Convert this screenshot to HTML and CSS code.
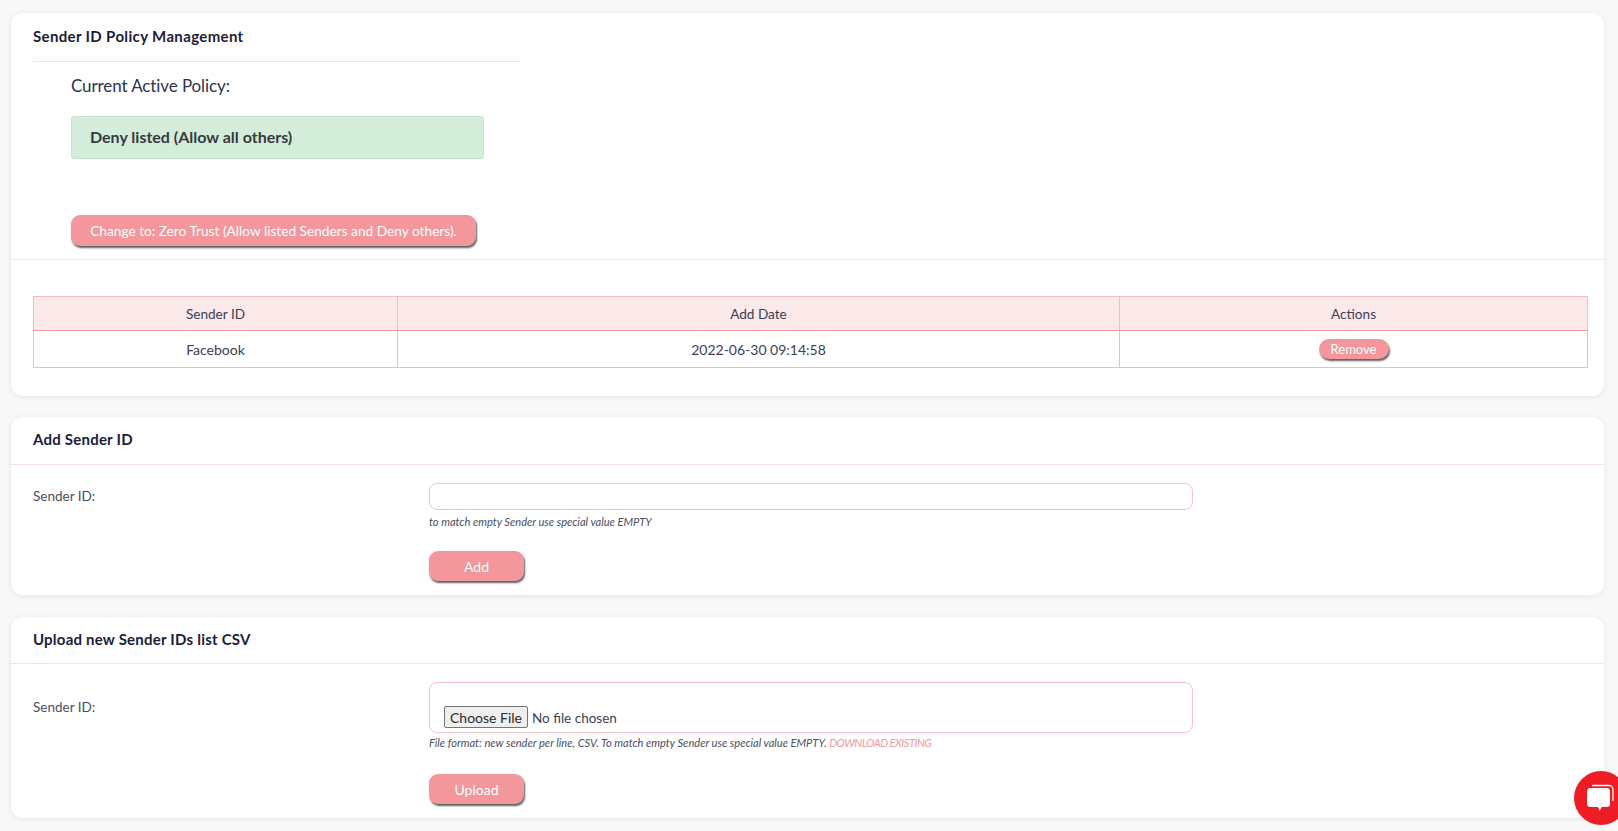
FILE: index.html
```html
<!DOCTYPE html>
<html lang="en">
<head>
<meta charset="utf-8">
<title>Sender ID Policy Management</title>
<link rel="stylesheet" href="styles.css">
</head>
<body>
<main class="page">
  <section class="card card-policy">
    <div class="policy-head"><h2 class="title">Sender ID Policy Management</h2></div>
    <div class="policy-body">
      <h3 class="policy-label">Current Active Policy:</h3>
      <div class="alert">Deny listed (Allow all others)</div>
      <button class="btn btn-change" type="button">Change to: Zero Trust (Allow listed Senders and Deny others).</button>
    </div>
    <div class="table-wrap">
      <table class="table">
        <colgroup><col class="col-a"><col class="col-b"><col class="col-c"></colgroup>
        <thead><tr><th>Sender ID</th><th>Add Date</th><th>Actions</th></tr></thead>
        <tbody><tr><td>Facebook</td><td>2022-06-30 09:14:58</td><td><button class="btn btn-remove" type="button">Remove</button></td></tr></tbody>
      </table>
    </div>
  </section>

  <section class="card card-add">
    <div class="card-head"><h2 class="title">Add Sender ID</h2></div>
    <form class="form">
      <label class="label">Sender ID:</label>
      <div class="field">
        <input class="input" type="text">
        <p class="help">to match empty Sender use special value EMPTY</p>
        <button class="btn btn-submit" type="button">Add</button>
      </div>
    </form>
  </section>

  <section class="card card-upload">
    <div class="card-head"><h2 class="title">Upload new Sender IDs list CSV</h2></div>
    <form class="form">
      <label class="label">Sender ID:</label>
      <div class="field">
        <div class="input input-file"><input class="file" type="file"></div>
        <p class="help">File format: new sender per line, CSV. To match empty Sender use special value EMPTY. <a class="link" href="#">DOWNLOAD EXISTING</a></p>
        <button class="btn btn-submit" type="button">Upload</button>
      </div>
    </form>
  </section>
</main>
<a class="chat" href="#" aria-label="Chat">
  <svg width="30" height="28" viewBox="0 0 30 28">
    <path d="M6 2.500h17a4 4 0 0 1 4 4V18" fill="none" stroke="#fff" stroke-width="1.300"/>
    <path d="M4.500 5h16a3.500 3.500 0 0 1 3.500 3.500v12a3.500 3.500 0 0 1-3.500 3.500h-5l-1.800 4-1.800-4H4.500A3.500 3.500 0 0 1 1 20.500v-12A3.500 3.500 0 0 1 4.500 5z" fill="#fff"/>
  </svg>
</a>
</body>
</html>
```
FILE: styles.css
```css
* { box-sizing: border-box; }
html, body { height: 100%; overflow: hidden; }
body {
  margin: 0;
  background: #f8f8f8;
  color: #3a3f55;
  font-family: "Lato", "Liberation Sans", sans-serif;
  font-size: 14px;
}
.page { padding: 13px 14px 0 11px; }
.card {
  background: #fff;
  border-radius: 12px;
  box-shadow: 0 1px 6px rgba(0, 0, 0, .08);
}
.card-policy { height: 383px; }
.card-add { height: 178px; margin-top: 21px; }
.card-upload { height: 201px; margin-top: 22px; }
.title {
  margin: 0;
  font-size: 15px;
  line-height: 20px;
  font-weight: 700;
  letter-spacing: .22px;
  color: #1b1d38;
}
.policy-head {
  width: 488px;
  height: 49px;
  margin-left: 22px;
  padding-top: 13px;
  border-bottom: 1px solid #e6e6e8;
}
.policy-head .title { letter-spacing: .35px; }
.policy-body {
  height: 198px;
  padding: 0 0 0 60px;
  border-bottom: 1px solid #f3e6e8;
}
.policy-label {
  margin: 0;
  padding-top: 12px;
  font-size: 17px;
  line-height: 24px;
  font-weight: 400;
  letter-spacing: -.1px;
  color: #2c3350;
}
.alert {
  width: 413px;
  height: 43px;
  margin-top: 18px;
  padding-left: 18px;
  background: #d4edda;
  border: 1px solid #c3e6cb;
  border-radius: 3px;
  color: #343a40;
  font-size: 16px;
  font-weight: 700;
  line-height: 39px;
}
.btn {
  display: block;
  border: 0;
  padding: 0;
  background: #f3979d;
  color: #fff;
  font: inherit;
  box-shadow: 1px 2px 2px #5f5f5f;
  cursor: pointer;
}
.btn-change {
  width: 405px;
  height: 31px;
  margin-top: 56px;
  border-radius: 9px;
  font-size: 13.700px;
}
.table-wrap { padding: 36px 16px 0 22px; }
.table {
  width: 1555px;
  border-collapse: collapse;
  table-layout: fixed;
  text-align: center;
}
.col-a { width: 364px; }
.col-b { width: 722px; }
.table th, .table td {
  border: 1px solid #f5bcc0;
  padding: 0;
  font-weight: 400;
  font-size: 14px;
}
.table th {
  height: 34px;
  font-size: 13.600px;
  background: #fce9ea;
  border-bottom-color: #f3979d;
}
.table td { height: 37px; }
.btn-remove {
  width: 70px;
  height: 20px;
  margin: 0 auto;
  border-radius: 10px;
  font-size: 13px;
}
.card-head {
  height: 48px;
  padding: 12px 22px 0;
  border-bottom: 1px solid #fadfe1;
}
.card-upload .card-head { height: 47px; }
.form {
  display: grid;
  grid-template-columns: 396px 764px;
  padding: 0 22px;
}
.label { padding-top: 21px; font-size: 13.500px; line-height: 20px; font-weight: 400; color: #4a4f63; }
.card-upload .label { padding-top: 33px; }
.field { padding-top: 18px; }
.input {
  display: block;
  width: 764px;
  height: 27px;
  background: #fff;
  border: 1px solid #f8c3c7;
  border-radius: 8px;
  outline: 0;
}
.input-file { height: 51px; padding: 23px 0 0 14px; }
.file { display: block; font: inherit; font-size: 13.500px; color: #3a3f55; }
.file::file-selector-button {
  height: 22px;
  width: 84px;
  margin-right: 4px;
  padding: 0;
  font: inherit;
  font-size: 14px;
  color: #2b2b2b;
  background: #efefef;
  border: 1px solid #767676;
  border-radius: 2px;
}
.help {
  margin: 5px 0 0;
  font-size: 11.100px;
  line-height: 14px;
  font-style: italic;
  font-weight: 400;
  color: #4a4f63;
}
.card-upload .help { margin-top: 3px; }
.link { color: #f3979d; text-decoration: none; letter-spacing: -.5px; }
.btn-submit {
  width: 95px;
  height: 30px;
  margin-top: 22px;
  border-radius: 9px;
  font-size: 14px;
}
.card-upload .btn-submit { margin-top: 24px; }
.chat {
  position: fixed;
  left: 1574px;
  top: 771px;
  width: 54px;
  height: 54px;
  padding: 12px 0 0 12px;
  display: block;
  border-radius: 50%;
  background: #ee1c25;
}
.chat svg { display: block; }
```
